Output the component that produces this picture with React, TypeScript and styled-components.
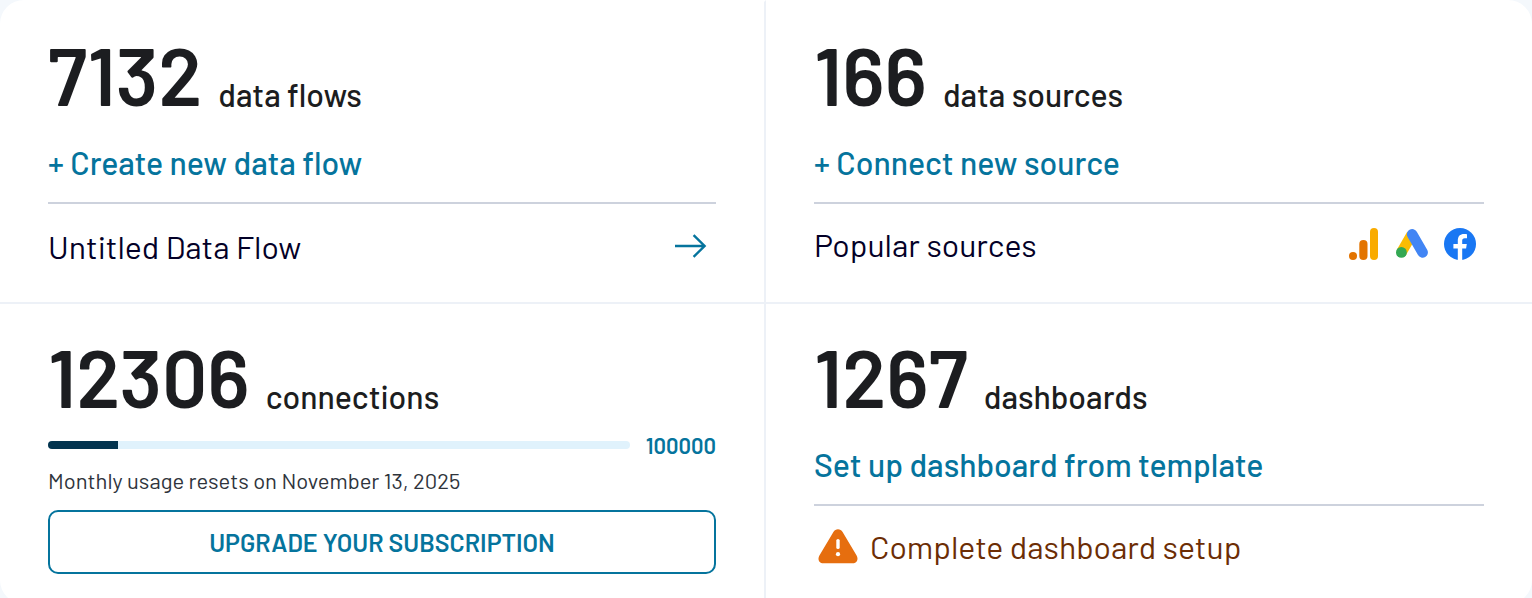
import React from "react";
import styled, { createGlobalStyle } from "styled-components";

const GlobalStyle = createGlobalStyle`
  *, *::before, *::after { box-sizing: border-box; }
  body {
    margin: 0;
    background: #f4f8fc;
    overflow: hidden;
    font-family: Barlow, Roboto, "Liberation Sans", sans-serif;
    color: #1c1d20;
  }
`;

const Card = styled.main`
  display: grid;
  grid-template-columns: repeat(2, minmax(0, 1fr));
  background: #ffffff;
  border-radius: 24px;
  overflow: hidden;
`;

const Cell = styled.section<{ $left?: boolean; $top?: boolean }>`
  display: flex;
  flex-direction: column;
  padding: 24px 48px 18px;
  border-top: 2px solid ${(p) => (p.$top ? "transparent" : "#edf1f7")};
  border-right: ${(p) => (p.$left ? "2px solid #edf1f7" : "none")};
`;

const Headline = styled.h2`
  display: flex;
  align-items: flex-end;
  gap: 16px;
  margin: 0;
  line-height: 56px;
  font-size: 32px;
  font-weight: 500;
`;

const Count = styled.span`
  font-size: 80px;
  font-weight: 600;
  line-height: 96px;
`;

const ActionLink = styled.a`
  align-self: flex-start;
  margin: 16px 0;
  font-size: 32px;
  font-weight: 500;
  line-height: 48px;
  color: #05749d;
  text-decoration: none;
`;

const Footer = styled.div<{ $lowered?: boolean }>`
  display: flex;
  align-items: center;
  justify-content: space-between;
  height: 82px;
  padding-top: ${(p) => (p.$lowered ? "4px" : "0")};
  padding-right: 8px;
  border-top: 2px solid #cdd2dd;
  font-size: 32px;
  font-weight: 400;
  color: #030027;
`;

const ArrowButton = styled.button`
  display: flex;
  padding: 0;
  border: 0;
  background: none;
  color: #05749d;
  cursor: pointer;
`;

const SourceIcons = styled.div`
  display: flex;
  align-items: center;
  gap: 16px;
`;

const Warning = styled.a`
  display: flex;
  align-items: center;
  gap: 8px;
  color: #6c2d04;
  text-decoration: none;
`;

const Meter = styled.div`
  display: flex;
  align-items: center;
  gap: 16px;
  margin-top: 8px;
  line-height: 26px;
`;

const Track = styled.div`
  flex: 1;
  height: 8px;
  border-radius: 4px;
  background: #e0f2fc;
  overflow: hidden;
`;

const Fill = styled.div`
  height: 100%;
  background: #03344f;
`;

const Limit = styled.span`
  font-size: 22px;
  font-weight: 600;
  color: #05749d;
`;

const Note = styled.p`
  margin: 8px 0 16px;
  font-size: 22px;
  line-height: 28px;
  color: #2f343c;
`;

const UpgradeButton = styled.button`
  height: 64px;
  padding: 0;
  border: 2px solid #05749d;
  border-radius: 10px;
  background: #ffffff;
  color: #05749d;
  font-family: inherit;
  font-size: 25px;
  font-weight: 600;
  text-transform: uppercase;
  cursor: pointer;
`;

const ArrowIcon = () => (
  <svg width="40" height="32" viewBox="0 0 40 32" fill="none" stroke="currentColor" strokeWidth="2.4" aria-hidden="true">
    <path d="M7 16H37M25.6 5.2L36.6 16L25.6 26.8" />
  </svg>
);

const AnalyticsIcon = () => (
  <svg width="32" height="32" viewBox="0 0 32 32" role="img" aria-label="Google Analytics">
    <rect x="22" y="0" width="8" height="32" rx="4" fill="#f9ab00" />
    <rect x="11.3" y="12" width="8.2" height="20" rx="4.1" fill="#e37400" />
    <circle cx="5" cy="28" r="4" fill="#e37400" />
  </svg>
);

const AdsIcon = () => (
  <svg width="32" height="32" viewBox="0 0 32 32" role="img" aria-label="Google Ads">
    <path d="M5.4 24.4L15.8 6.4" stroke="#fbbc04" strokeWidth="10.6" />
    <path d="M16.2 6.4L26.6 24.4" stroke="#4285f4" strokeWidth="10.6" strokeLinecap="round" />
    <circle cx="5.4" cy="24.4" r="5.4" fill="#34a853" />
  </svg>
);

const FacebookIcon = () => (
  <svg width="32" height="32" viewBox="0 0 32 32" role="img" aria-label="Facebook">
    <circle cx="16" cy="16" r="16" fill="#1977f3" />
    <path
      d="M13.8 31.9V20.6H9.4V16H13.8V12.4C13.8 8.2 16.2 6 20 6C21.4 6 22.8 6.2 23 6.3V10.2H20.8C18.8 10.2 18.2 11.4 18.2 12.8V16H22.8L22.1 20.6H18.2V31.9Z"
      fill="#ffffff"
    />
  </svg>
);

const WarningIcon = () => (
  <svg width="48" height="48" viewBox="0 0 48 48" aria-hidden="true">
    <path
      d="M19.4 9.9C21.4 6.3 26.6 6.3 28.6 9.9L42.6 33.4C44.8 37.4 42.8 41.3 38.4 41.3H9.6C5.2 41.3 3.2 37.4 5.4 33.4Z"
      fill="#e66e0f"
    />
    <path d="M24 18.6V25.4" stroke="#ffffff" strokeWidth="3.4" strokeLinecap="round" />
    <circle cx="24" cy="32.2" r="2.1" fill="#ffffff" />
  </svg>
);

const used = 12;

export default function App() {
  return (
    <>
      <GlobalStyle />
      <Card>
        <Cell $left $top>
          <Headline>
            <Count>7132</Count>
            <span>data flows</span>
          </Headline>
          <ActionLink href="#new-flow">+ Create new data flow</ActionLink>
          <Footer $lowered>
            <span>Untitled Data Flow</span>
            <ArrowButton type="button" aria-label="Open Untitled Data Flow">
              <ArrowIcon />
            </ArrowButton>
          </Footer>
        </Cell>
        <Cell $top>
          <Headline>
            <Count>166</Count>
            <span>data sources</span>
          </Headline>
          <ActionLink href="#new-source">+ Connect new source</ActionLink>
          <Footer>
            <span>Popular sources</span>
            <SourceIcons>
              <AnalyticsIcon />
              <AdsIcon />
              <FacebookIcon />
            </SourceIcons>
          </Footer>
        </Cell>
        <Cell $left>
          <Headline>
            <Count>12306</Count>
            <span>connections</span>
          </Headline>
          <Meter>
            <Track role="progressbar" aria-label="Connections used" aria-valuenow={used} aria-valuemin={0} aria-valuemax={100}>
              <Fill style={{ width: `${used}%` }} />
            </Track>
            <Limit>100000</Limit>
          </Meter>
          <Note>Monthly usage resets on November 13, 2025</Note>
          <UpgradeButton type="button">Upgrade your subscription</UpgradeButton>
        </Cell>
        <Cell>
          <Headline>
            <Count>1267</Count>
            <span>dashboards</span>
          </Headline>
          <ActionLink href="#templates">Set up dashboard from template</ActionLink>
          <Footer>
            <Warning href="#setup">
              <WarningIcon />
              <span>Complete dashboard setup</span>
            </Warning>
          </Footer>
        </Cell>
      </Card>
    </>
  );
}
